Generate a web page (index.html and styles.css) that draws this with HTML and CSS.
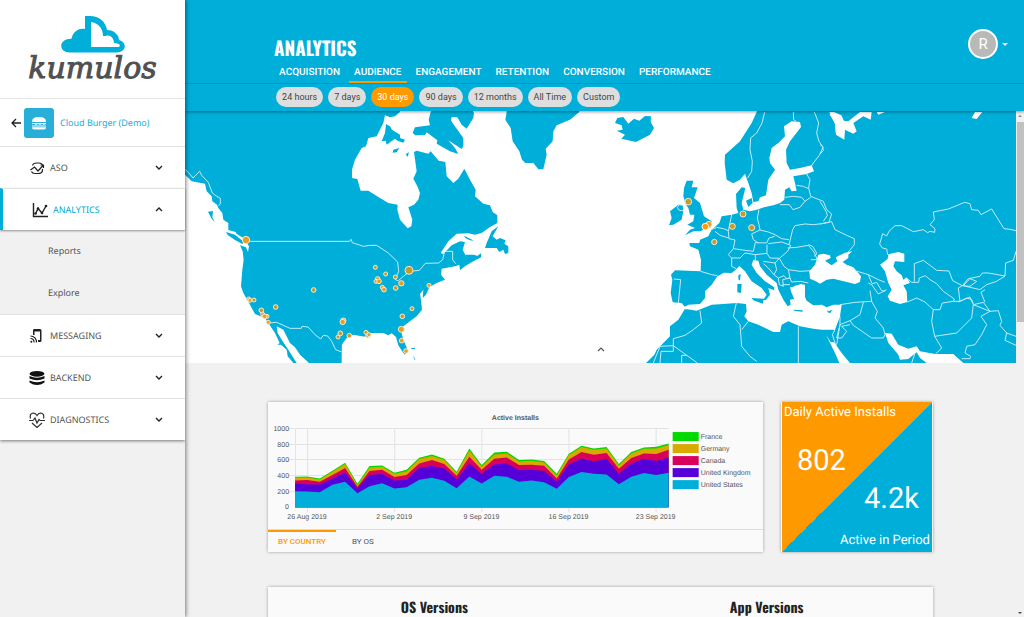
FILE: index.html
```html
<!DOCTYPE html>
<html lang="en">
<head>
<meta charset="utf-8">
<title>Kumulos Analytics</title>
<meta name="viewport" content="width=device-width, initial-scale=1">
<link rel="stylesheet" href="styles.css">
</head>
<body>
<div class="app">
  <aside class="sidebar">
    <a class="brand" href="#">
      <svg class="brand-cloud" viewBox="0 0 64 37" aria-hidden="true"><path fill="#00aeda" d="M9 36.500C-3 36-2 24 8 23C10 23 10.500 23 11 21C13 15 18 12 24 13V0H29C38 0 45 6 46 14C53 14 58 19 58 24C66 26 66 36 56 36.500Z"/><path fill="#fff" d="M30 6C37 7 42 12 42 20H44C49 18 53 22 53 27C60 27 60 31 57 31H30Z"/></svg>
      <span class="brand-name">kumulos</span>
    </a>
    <a class="current-app" href="#">
      <svg class="back" viewBox="0 0 10 10" aria-hidden="true"><path d="M10 5H1M5 1L1 5L5 9" fill="none" stroke="#222" stroke-width="1.300"/></svg>
      <span class="app-icon"><svg viewBox="0 0 16 14" aria-hidden="true"><g fill="#fff"><path d="M1 6C1 2 4 1 8 1S15 2 15 6Z"/><path d="M1 7h14v1l-2 .8-2-.8-2 .8-2-.8-2 .8-2-.8L1 8Z"/><path d="M1 9.500h14v1H1ZM1 11.300h14C15 13 14 13.500 13 13.500H3C2 13.500 1 13 1 11.300Z"/></g></svg></span>
      <span>Cloud Burger (Demo)</span>
    </a>
    <nav>
      <a class="nav-item" href="#"><svg class="nav-icon" viewBox="0 0 16 16" aria-hidden="true"><g fill="none" stroke="#222" stroke-width="1.200"><path d="M3.500 5.500C4 3 6 3 8 3H10C12 3 13 4 13.500 5M13.500 9C14 13 11 13.500 9 13.500H6C4 13.500 3 13 2.500 11.500"/><path d="M1.500 10L5.500 7L9 11L14 5.500M11.500 5h3v3"/></g></svg><span>ASO</span><svg class="chev" viewBox="0 0 8 6" aria-hidden="true"><path d="M1 1L4 4L7 1"/></svg></a>
      <a class="nav-item active" href="#"><svg class="nav-icon" viewBox="0 0 16 16" aria-hidden="true"><g fill="none" stroke="#222" stroke-width="1.400"><path d="M1.500 1V14.500H16M3.500 12L6 6.500L10 11L14 4"/></g><g fill="#222"><circle cx="3.500" cy="11.500" r="1.300"/><circle cx="6" cy="6.500" r="1.300"/><circle cx="10" cy="11" r="1.300"/><circle cx="14" cy="4" r="1.300"/></g></svg><span>ANALYTICS</span><svg class="chev" viewBox="0 0 8 6" aria-hidden="true"><path d="M1 4L4 1L7 4"/></svg></a>
      <div class="subnav"><a href="#">Reports</a><a href="#">Explore</a></div>
      <a class="nav-item" href="#"><svg class="nav-icon" viewBox="0 0 16 16" aria-hidden="true"><path fill="#222" fill-rule="evenodd" d="M4 2.500Q4 1 5 1H11Q12.500 1 12.500 2.500V12.500Q12.500 14 11 14H9V12H11V3.500H5.500V7H4Z"/><g fill="none" stroke="#222" stroke-width="1.200"><path d="M1.500 8A6 6 0 0 1 7.500 14.500M1.500 10.500A3.500 3.500 0 0 1 5 14.500"/></g><circle cx="2.300" cy="13.700" r="1" fill="#222"/></svg><span>MESSAGING</span><svg class="chev" viewBox="0 0 8 6" aria-hidden="true"><path d="M1 1L4 4L7 1"/></svg></a>
      <a class="nav-item" href="#"><svg class="nav-icon" viewBox="0 0 16 16" aria-hidden="true"><g fill="#111"><ellipse cx="8" cy="3.800" rx="7.500" ry="2.900"/><path d="M.5 6Q8 9.500 15.500 6V8.500Q8 12 .5 8.500Z"/><path d="M.5 10.500Q8 14 15.500 10.500V12.500Q8 17.500 .5 12.500Z"/></g></svg><span>BACKEND</span><svg class="chev" viewBox="0 0 8 6" aria-hidden="true"><path d="M1 1L4 4L7 1"/></svg></a>
      <a class="nav-item" href="#"><svg class="nav-icon" viewBox="0 0 16 16" aria-hidden="true"><g fill="none" stroke="#333" stroke-width="1.200"><path d="M1.500 6.500C0 0 6 0 8 3.500C10 0 16 0 14.500 6.500M0 8.500H4L6 6L8 11L10 7.500L11 8.500H16M3 11L8 15.500L13 11"/></g></svg><span>DIAGNOSTICS</span><svg class="chev" viewBox="0 0 8 6" aria-hidden="true"><path d="M1 1L4 4L7 1"/></svg></a>
    </nav>
  </aside>

  <div class="main">
    <header class="header">
      <div class="title-bar">
        <div class="inner">
          <h1>ANALYTICS</h1>
          <nav class="tabs"><a href="#">ACQUISITION</a><a class="on" href="#">AUDIENCE</a><a href="#">ENGAGEMENT</a><a href="#">RETENTION</a><a href="#">CONVERSION</a><a href="#">PERFORMANCE</a></nav>
        </div>
        <button class="user" aria-label="Account"><span class="avatar">R</span><span class="caret"></span></button>
      </div>
      <div class="range-bar"><div class="inner chips"><button>24 hours</button><button>7 days</button><button class="on">30 days</button><button>90 days</button><button>12 months</button><button>All Time</button><button>Custom</button></div></div>
    </header>

    <div class="body">
      <main class="content">
        <section class="map">
          <svg viewBox="0 0 831 252" role="img" aria-label="Map of installs">
            <!-- North America, west -->
            <g transform="translate(0 -3) scale(.33333)">
              <path class="land" d="M-5 5H470V765H372L345 740L330 718L315 705L295 665L275 655L278 675L290 695L310 725L335 765H325L308 745L305 725L288 710H277L284 705L270 675L250 645L240 630L210 618L195 590L175 555L168 535L172 485L176 455L173 430L165 412L183 418L189 432L192 415L175 390L155 378L152 372L130 366V345L115 335L112 315L100 300L96 290L82 280L80 265L65 250L60 227L20 220L0 200L-5 200Z"/>
              <path class="land" d="M69 311L84 309L82 328L90 343L80 332ZM123 372L150 380L177 402L172 408L150 396L128 381Z"/>
            </g>
            <!-- North America, east, with the Arctic islands -->
            <g transform="translate(155 -3) scale(.33333)">
              <path class="land" d="M-1 5H180V12L165 25L150 28L135 22L130 45L110 85L85 90L78 115L65 120L45 155L36 185V210L52 213L62 248L85 248L120 270L145 285L173 290L172 305L180 335L203 361L214 355L217 335L205 298L222 290L235 275L240 255L232 235L220 212L230 190L222 132L230 128L265 137L272 130L296 158L316 162L320 205L340 225L355 212L373 182L390 215L407 245L405 265L430 287L450 292L458 312L472 322V345L450 357L425 375L405 380L385 376L350 377L325 400L302 435L310 438L335 412L360 400L375 402L368 425L378 445L400 452L423 436L424 448L400 460L375 475L360 487L358 470L345 475L305 482L303 500L315 515L290 525L268 538L258 560L248 570L250 545L240 558L243 575L246 605L230 625L190 655L184 672L190 695L203 725L195 740L190 735L175 712L168 687L155 676L145 682L130 675L95 675L85 677L92 688L65 685L40 680L20 690L5 710L2 765H-1Z"/>
              <path class="land" d="M138 48L150 55L156 65L180 80V90L195 95L190 104L172 98L165 92L140 110L137 98L125 100L135 75ZM160 125L178 120L170 133L158 134ZM197 138L207 133L203 147ZM278 5L272 12L266 35L270 52L225 58L218 75L226 82L255 81L260 73L292 97L290 107L330 130L355 138L345 120L325 97L365 123L370 115V90L350 62L333 38L335 27L352 28L365 50L380 62L400 30L402 15L395 5ZM475 355L458 385L470 395L480 390L497 397L493 407L505 415V435L495 438L490 425L478 432L470 420H435L440 405L455 370ZM372 383L402 398L390 397L376 390ZM375 440L402 440L420 446L400 455H385ZM213 721L225 719V723H214ZM218 742L226 753L225 757Z"/>
              <path class="line" d="M173 462L176 490L166 515L175 518L190 505L210 490L238 487L256 466L296 465L308 455L314 430H338V455L347 467"/>
            </g>
            <!-- Borders of the United States -->
            <g transform="translate(0 -3) scale(.33333)">
              <path class="line" d="M0 184L10 193L24 210L44 190L50 202L70 223L82 255L94 264L106 271V288L100 293M183 400H494L498 394L502 404L535 415L555 412L575 412L610 435L638 462M250 645L275 643L315 661H349L351 655L369 657L390 680L407 693L415 682L428 684L440 700L452 725L470 732"/>
            </g>
            <!-- Greenland and Iceland -->
            <g transform="translate(315 -3) scale(.33333)">
              <path class="land" d="M20 5V12L16 35L32 60L38 100L58 130L66 155L76 165H100L115 184H130L140 140L137 122L158 100L160 70L170 52L210 35L238 12V5ZM345 45L352 30L370 27L385 47L402 32L418 38L435 24L453 25L452 42L462 60L450 80L408 102L364 92L375 80L350 68L368 65L365 52Z"/>
            </g>
            <!-- Europe, Africa and Asia -->
            <g transform="translate(455 -3) scale(.33333)">
              <path class="land" d="M354 5L350 12L335 45L300 100L255 140L254 165L260 215L280 226L300 215L315 197L325 225L335 255L340 282L355 280L360 268L378 262L382 235L385 215L405 185L390 165L388 150L395 120L415 105L435 85L432 55L455 40L480 42L483 57L450 100L438 125L440 165L450 185L480 180L515 172L522 190L500 198L460 205L465 225L470 248L455 250L448 238L435 245L433 275L420 285L400 292L372 298L350 305L330 310L310 305L305 285L310 265L316 240L305 238L288 258L290 300L295 315L275 320L245 325L238 345L215 365L205 385L180 395L178 405L148 405L150 415L175 425L183 455L182 490L105 487L93 500L97 515L92 555L98 583L125 585L135 598L145 590L180 588L195 570V550L215 530L232 505L252 494L275 495L290 483L298 474L315 490L335 520L365 540L380 560L370 575L377 577L390 560L385 540L402 547L403 538L375 520L350 495L335 470L340 456L355 458L360 475L380 500L410 525L415 545L430 575L443 595L452 590L450 575L465 572L455 555L450 538L470 535L482 529L495 530V540L494 565L500 578L520 592L545 590L560 598L580 590L605 590L600 625L585 665H545L520 662L480 655L445 640L425 650L420 672L400 672L355 650L325 640L313 625L320 610L318 588L290 585L250 588L215 590L170 608L135 602L115 635L90 655V685L50 725L43 740L18 765H1130V5Z"/>
              <path class="land" d="M115 290L128 292L130 308L125 335L100 350L87 352L95 330L90 310ZM140 218L160 218L155 238H173L162 270L180 285L192 325L215 340L213 358L180 370L160 370L135 382L150 365L165 360L142 350L160 340L163 320L150 320L145 300L138 290L130 265L132 240ZM335 570L372 572L368 587L340 577ZM292 528L305 528L303 555L292 553ZM295 502L302 498L300 518L295 514ZM318 278L335 270L338 285L325 297ZM460 605L488 607V611L464 609ZM560 609L577 603L572 613Z"/>
              <path class="sea" d="M452 545L465 533L485 528L495 540V575L502 583L505 593L480 588L475 575L465 580ZM130 597L146 592L150 604L133 604ZM568 12L582 12L604 22L612 39L610 80L588 80L586 50Z"/>
              <path class="line" d="M374 12L366 45L350 75L332 90L330 125L337 160L335 190L323 210M460 12L461 35L470 42M523 12L536 45L530 75L537 100L549 118L538 142L520 165L514 175M500 198L510 215L506 240L512 265L550 280L560 305L575 318L567 343L545 347L520 350L495 348L465 353L458 365L452 390L447 410M470 232L490 235L506 242M435 268L460 265L485 268L495 280L480 298L459 305L448 290L420 290M495 280L512 268M357 305L352 330L357 350L360 366L335 378L340 395L355 405M360 366L385 372L405 380L425 392L447 395M275 320L270 345L265 370L267 392L285 396L280 422L308 426L340 430L346 404L380 405L387 390L404 385M213 365L230 358L250 362L265 368M225 370L240 382L266 390M182 490L215 500L232 503M101 513L122 515L119 545L115 585M280 422L265 440L275 450H300L315 435L346 440L381 436V410M275 450V475L290 483M381 436L390 450L418 451L443 430L452 412L425 402L385 407M346 440V457M443 420L470 418L505 412L522 432L532 455L512 455M418 451L432 475L445 485L480 490L512 488M370 460L405 465L418 451M370 467L385 480L402 500L410 485L405 465M402 500L415 510L432 503L440 512L450 510L445 485M415 510L418 530L430 535L428 515L450 510L455 522L482 520L505 525M428 530L450 530M505 410L518 415L531 437L522 445M100 713L60 715L40 765M100 730H63L60 765M100 730V692L135 682L160 665L185 645L180 608M100 713L172 765M125 765V742H140M289 585L280 625L300 650L305 715L330 745L350 760M325 640L305 665M475 655V765M585 665L577 680L590 720M590 710L600 650L600 625"/>
              <path class="line" d="M128 292L118 290L112 298L118 307L129 308"/>
            </g>
            <g transform="translate(635 -3) scale(.33333)">
              <path class="sea" d="M28 18L50 22L68 38L85 40L120 12H155L152 35L130 25L100 45L110 70L100 77L75 65L73 95L48 80L45 45ZM170 12H195L175 20ZM465 12H487L470 33L455 30ZM-5 440L10 437L30 442L32 450L15 458L35 472L52 460L47 448L75 434L97 430L85 440V450L68 462L80 470L100 478L123 505L120 522L105 528L80 522L40 512L20 515L0 527L-12 520L-30 512L-32 490L-15 470ZM180 470L203 453L205 439L235 432L253 437V462L225 460L220 475L230 490L245 502L250 515L260 508L270 525L250 532L260 550L262 582L240 588L210 578L203 565L215 545L205 525L195 490ZM18 680L32 702L42 703L65 735L90 765H58L45 735ZM195 675L215 677L235 710L265 722L290 715L300 730L345 738L400 738L430 765H320L300 750L290 733L280 740L265 753L240 755L235 740L225 728L205 705ZM-15 615L20 610L38 600L57 592L60 625L42 665L0 650Z"/>
              <path class="land" d="M20 611L38 605L30 616Z"/>
              <path class="line" d="M0 110L8 115L10 128L0 138M0 280L18 310L22 322L10 340M0 348L35 341L45 365L80 382L103 392V410L85 432M203 440L200 423L187 420L179 408L188 377L200 384L207 370L225 353L245 353L280 371L310 365L323 374L330 370L344 373L345 362L330 350L343 335L340 312L385 303L434 283L450 287L455 305L475 307L483 320L515 303L552 362L570 364L588 368M283 521V467L310 457L350 487L387 489L398 518L427 533L445 512L480 505L487 495L505 495L555 504L557 465L580 457L588 430M262 512L275 523H296L298 510L316 503L330 515L350 527L370 550L403 573L400 580L367 585L360 605L340 605L315 582L290 570L262 582M427 533L415 540L420 580L400 580M427 533L450 535L470 520L450 512L430 533L480 545L500 530L530 520L555 504M420 580L450 567L460 590L490 583L510 610L460 590L455 630L430 655L410 675L344 685L335 640L340 605M415 582L440 570L455 575L460 587M495 583L483 553L495 545M510 610L483 625L500 650L485 680L465 710L440 715L435 735L452 745L450 752L425 752M344 685L365 720L347 738M510 610L535 608L545 640L540 652L560 675L555 697L588 712M560 675L588 685M105 488L145 500L175 515L195 523M145 525L155 530L175 558L200 545M155 528L170 523L185 548L195 550M145 500L155 525M60 590L105 583L155 580L150 548M155 580L172 610L165 630L190 660L195 680M130 583L120 620L90 638L60 650M90 638L100 652L155 690L190 690L195 680M60 650L50 690L65 690L80 670L65 655L90 650M285 735L275 765"/>
            </g>
            <g transform="translate(0 -3) scale(.33333)" class="dots">
              <circle class="hot" cx="183" cy="396" r="11"/><circle cx="571" cy="478" r="6"/><circle cx="602" cy="498" r="6"/><circle class="hot" cx="578" cy="513" r="7"/><circle class="hot" cx="573" cy="520" r="6"/><circle class="hot" cx="582" cy="520" r="7"/><circle cx="631" cy="507" r="6"/><circle class="hot" cx="592" cy="538" r="6"/><circle class="hot" cx="597" cy="545" r="7"/><circle cx="632" cy="540" r="7"/><circle class="hot" cx="649" cy="526" r="8"/><circle cx="386" cy="546" r="7"/><circle class="hot" cx="191" cy="573" r="6"/><circle class="hot" cx="195" cy="577" r="6"/><circle cx="207" cy="576" r="6"/><circle cx="272" cy="597" r="7"/><circle cx="229" cy="607" r="7"/><circle class="hot" cx="233" cy="619" r="6"/><circle class="hot" cx="246" cy="625" r="6"/><circle class="hot" cx="239" cy="625" r="7"/><circle class="hot" cx="250" cy="643" r="6"/><circle class="hot" cx="475" cy="638" r="8"/><circle class="hot" cx="473" cy="642" r="8"/><circle cx="466" cy="676" r="7"/><circle cx="459" cy="687" r="6"/><circle cx="493" cy="683" r="7"/><circle cx="543" cy="673" r="6"/><circle class="hot" cx="548" cy="684" r="6"/><circle class="hot" cx="552" cy="680" r="6"/>
              <circle cx="672" cy="487" r="12"/><circle class="hot" cx="732" cy="532" r="6"/><circle cx="681" cy="602" r="6"/><circle cx="652" cy="625" r="7"/><circle class="hot" cx="649" cy="664" r="9"/><circle class="hot" cx="650" cy="698" r="7"/><circle class="hot" cx="663" cy="729" r="7"/>
              <circle cx="1510" cy="281" r="10"/><circle class="hot" cx="1572" cy="349" r="9"/><circle class="bright" cx="1561" cy="356" r="10"/><circle cx="1588" cy="402" r="8"/><circle cx="1674" cy="318" r="9"/><circle cx="1642" cy="355" r="9"/><circle cx="1700" cy="359" r="9"/>
            </g>
          </svg>
          <button class="collapse" aria-label="Collapse map"><svg viewBox="0 0 8 6" aria-hidden="true"><path d="M1 5L4 2L7 5"/></svg></button>
        </section>

        <div class="inner cards">
          <section class="card chart-card">
            <svg class="chart" viewBox="0 0 494 127" role="img" aria-label="Active Installs">
              <path class="grid" d="M20 26.500H400M20 42.500H400M20 57.500H400M20 73.500H400M20 89.500H400M27.500 26V105M39.500 26V110M126.500 26V110M213.500 26V110M300.500 26V110M387.500 26V110"/>
              <g transform="translate(-4 -7) scale(.33333)">
                <path fill="#00d900" d="M93 336V245L129 244L167 250L205 227L243 203L280 266L316 213L354 211L391 233L427 224L465 188L503 178L540 191L577 230L615 160L652 210L690 172L727 170L764 195L802 193L839 198L877 236L913 176L951 152L988 160L1026 156L1063 207L1100 171L1138 157L1175 155L1212 145V336Z"/>
                <path fill="#d9a900" d="M93 336V247L129 247L167 253L205 230L243 207L280 271L316 217L354 215L391 236L427 229L465 192L503 183L540 195L577 234L615 166L652 214L690 178L727 175L764 199L802 197L839 202L877 241L913 180L951 156L988 164L1026 160L1063 211L1100 175L1138 161L1175 160L1212 150V336Z"/>
                <path fill="#d9005b" d="M93 336V256L129 255L167 260L205 240L243 219L280 275L316 228L354 224L391 246L427 240L465 205L503 195L540 207L577 242L615 185L652 224L690 191L727 187L764 210L802 209L839 212L877 250L913 193L951 171L988 179L1026 174L1063 221L1100 189L1138 175L1175 177L1212 164V336Z"/>
                <path fill="#5500d9" d="M93 336V265L129 267L167 268L205 250L243 232L280 279L316 240L354 237L391 256L427 254L465 218L503 213L540 220L577 253L615 205L652 236L690 208L727 205L764 225L802 224L839 228L877 260L913 208L951 190L988 199L1026 192L1063 236L1100 206L1138 191L1175 198L1212 187V336Z"/>
                <path fill="#00aed9" d="M93 336V288L129 289L167 291L205 269L243 260L280 294L316 273L354 264L391 280L427 276L465 254L503 248L540 257L577 279L615 244L652 265L690 242L727 245L764 260L802 256L839 261L877 281L913 246L951 231L988 236L1026 238L1063 267L1100 245L1138 234L1175 240L1212 233V336Z"/>
              </g>
              <text class="chart-title" x="247" y="18" text-anchor="middle">Active Installs</text>
              <g text-anchor="end"><text x="21" y="29">1000</text><text x="21" y="45">800</text><text x="21" y="60">600</text><text x="21" y="76">400</text><text x="21" y="92">200</text><text x="21" y="107">0</text></g>
              <g text-anchor="middle"><text x="39" y="117">26 Aug 2019</text><text x="126" y="117">2 Sep 2019</text><text x="213" y="117">9 Sep 2019</text><text x="300" y="117">16 Sep 2019</text><text x="387" y="117">23 Sep 2019</text></g>
              <rect x="404" y="30" width="26" height="9" fill="#00d900"/><rect x="404" y="42" width="26" height="9" fill="#d9a900"/><rect x="404" y="54" width="26" height="9" fill="#d9005b"/><rect x="404" y="66" width="26" height="9" fill="#5500d9"/><rect x="404" y="78" width="26" height="9" fill="#00aed9"/>
              <text x="432" y="37">France</text><text x="432" y="49">Germany</text><text x="432" y="61">Canada</text><text x="432" y="73">United Kingdom</text><text x="432" y="85">United States</text>
            </svg>
            <div class="card-tabs"><button class="on">BY COUNTRY</button><button>BY OS</button></div>
          </section>
          <section class="card totals">
            <span class="label">Daily Active Installs</span>
            <strong class="daily">802</strong>
            <strong class="period">4.2k</strong>
            <span class="label end">Active in Period</span>
          </section>
        </div>
        <section class="inner card versions"><h2>OS Versions</h2><h2>App Versions</h2></section>
      </main>
      <div class="scrollbar" aria-hidden="true"><i class="up"></i><i class="thumb"></i><i class="down"></i></div>
    </div>
  </div>
</div>
</body>
</html>
```
FILE: styles.css
```css
* { box-sizing: border-box; }
body { margin: 0; background: #f1f1f1; font-family: Roboto, "Liberation Sans", sans-serif; color: #555; text-rendering: geometricPrecision; }
a { color: inherit; text-decoration: none; }
button { border: 0; padding: 0; background: none; font-family: inherit; color: inherit; }
svg { display: block; }

.app { display: flex; height: 100vh; overflow: hidden; }

/* Sidebar */
.sidebar { flex: 0 0 185px; z-index: 3; background: #f1f1f1; box-shadow: 1px 0 4px rgba(0, 0, 0, .5); font-family: "Noto Sans", "Open Sans", sans-serif; font-size: 9px; }
.brand { display: flex; flex-direction: column; align-items: center; height: 98px; padding-top: 16px; background: #fff; }
.brand-cloud { width: 64px; height: 37px; }
.brand-name { font: italic 30px/32px "DejaVu Serif", serif; color: #505052; -webkit-text-stroke: 1px #505052; }
.current-app { display: flex; align-items: center; height: 48px; padding-left: 11px; background: #fff; border-top: 1px solid #e4e4e4; color: #1cacd8; }
.back { width: 10px; height: 10px; }
.app-icon { display: grid; place-items: center; width: 30px; height: 30px; margin: 0 6px 0 3px; border-radius: 3px; background: #27aed9; }
.app-icon svg { width: 16px; height: 14px; }
.nav-item { display: flex; align-items: center; gap: 5px; height: 42px; padding: 0 22px 0 29px; border-top: 1px solid #e2e2e2; background: #fff; }
.nav-item span { flex: 1; }
.nav-item.active { position: relative; border-left: 3px solid #00aeda; color: #00a7d4; box-shadow: 0 1px 2px rgba(0, 0, 0, .4); }
.nav-item:last-child { box-shadow: 0 1px 3px rgba(0, 0, 0, .5); clip-path: inset(0 0 -4px 0); }
.nav-icon { width: 16px; height: 16px; }
.chev { width: 8px; height: 6px; fill: none; stroke: #222; stroke-width: 1.4; }
.subnav { padding-left: 48px; }
.subnav a { display: block; line-height: 42px; }

/* Header */
.main { flex: 1; min-width: 0; display: flex; flex-direction: column; }
.header { z-index: 2; background: #00aeda; color: #fff; box-shadow: 0 1px 3px rgba(0, 0, 0, .4); }
.inner { width: 80%; margin: 0 auto; }
.title-bar { position: relative; padding: 37px 8px 0 0; border-bottom: 1px solid #0796be; }
.title-bar .inner { padding-left: 6px; }
h1 { margin: 0; font: bold 19px/22px Oswald, "Roboto Condensed", "Liberation Sans Narrow", Roboto, sans-serif; }
.tabs { display: flex; gap: 3px; }
.tabs a { padding: 5px 6px 0 5px; border-bottom: 2px solid transparent; font-size: 10px; line-height: 17px; font-weight: 500; }
.tabs a.on { border-color: #f90; }
.user { position: absolute; right: 16px; top: 29px; display: flex; align-items: center; gap: 4px; }
.avatar { display: grid; place-items: center; width: 30px; height: 30px; border: 2px solid #fff; border-radius: 50%; background: #b9b9b9; font-size: 15px; }
.caret { border: 3px solid transparent; border-top-color: #fff; border-bottom: 0; }
.range-bar { padding: 3px 8px 4px 0; }
.chips { display: flex; gap: 5px; padding-left: 8px; }
.chips button { height: 20px; padding: 0 6px; border-radius: 10px; background: #dedede; color: #444; font-size: 9px; }
.chips button.on { background: #f90; color: #fff; }

/* Scrolling area */
.body { flex: 1; min-height: 0; display: flex; }
.content { flex: 1; min-width: 0; overflow: hidden; }
.map { position: relative; background: #fff; }
.map > svg { width: 100%; }
.land { fill: #00aeda; }
.sea { fill: #fff; }
.line { fill: none; stroke: #c4ebf6; stroke-width: 3; stroke-linejoin: round; }
.dots { stroke: #f4ead0; stroke-width: 3; fill: #c69a2b; }
.dots .hot { fill: #eb9d1d; }
.dots .bright { fill: #f90; stroke: #fff; }
.collapse { position: absolute; bottom: 11px; left: 0; right: 0; width: 8px; margin: 0 auto; }
.collapse svg { width: 8px; height: 6px; fill: none; stroke: #555; stroke-width: 1.2; }

.cards { display: flex; gap: 18px; padding-top: 39px; }
.card { background: #fafafa; box-shadow: 0 0 3px rgba(0, 0, 0, .35); }
.chart-card { flex: 1; min-width: 0; }
.chart { width: 100%; font-family: "Liberation Sans", Arial, sans-serif; font-size: 7px; fill: #555; }
.chart-title { font-weight: bold; }
.grid { stroke: #e3e3e3; fill: none; }
.card-tabs { display: flex; border-top: 1px solid #ddd; }
.card-tabs button { padding: 0 10px; border-top: 2px solid transparent; font-size: 8px; line-height: 20px; }
.card-tabs button + button { margin-left: 6px; }
.card-tabs .on { border-color: #f90; color: #f90; font-weight: 500; }
.totals { display: flex; flex-direction: column; width: 152px; padding: 2px; border: 1px solid #fff; border-width: 0 1px; background: linear-gradient(135deg, #f90 50%, #00aeda 50%); color: #fff; }
.label { font-size: 13px; line-height: 18px; }
.totals strong { font-size: 29px; line-height: 38px; font-weight: 400; }
.daily { padding: 20px 0 0 13px; }
.period { padding-right: 11px; text-align: right; }
.end { margin-top: auto; text-align: right; }
.versions { display: flex; height: 80px; margin-top: 35px; padding-top: 11px; }
h2 { flex: 1; margin: 0; text-align: center; color: #222; font: bold 14px/20px Oswald, "Roboto Condensed", "Liberation Sans Narrow", Roboto, sans-serif; }

.scrollbar { flex: 0 0 8px; display: flex; flex-direction: column; align-items: center; padding: 4px 0 3px; background: #f1f1f1; }
.scrollbar .up { border: 2px solid transparent; border-bottom-color: #888; border-top: 0; }
.scrollbar .thumb { width: 7px; flex: 0 0 40%; margin-top: 5px; background: #c1c1c1; }
.scrollbar .down { margin-top: auto; border: 2px solid transparent; border-top-color: #444; border-bottom: 0; }
```
